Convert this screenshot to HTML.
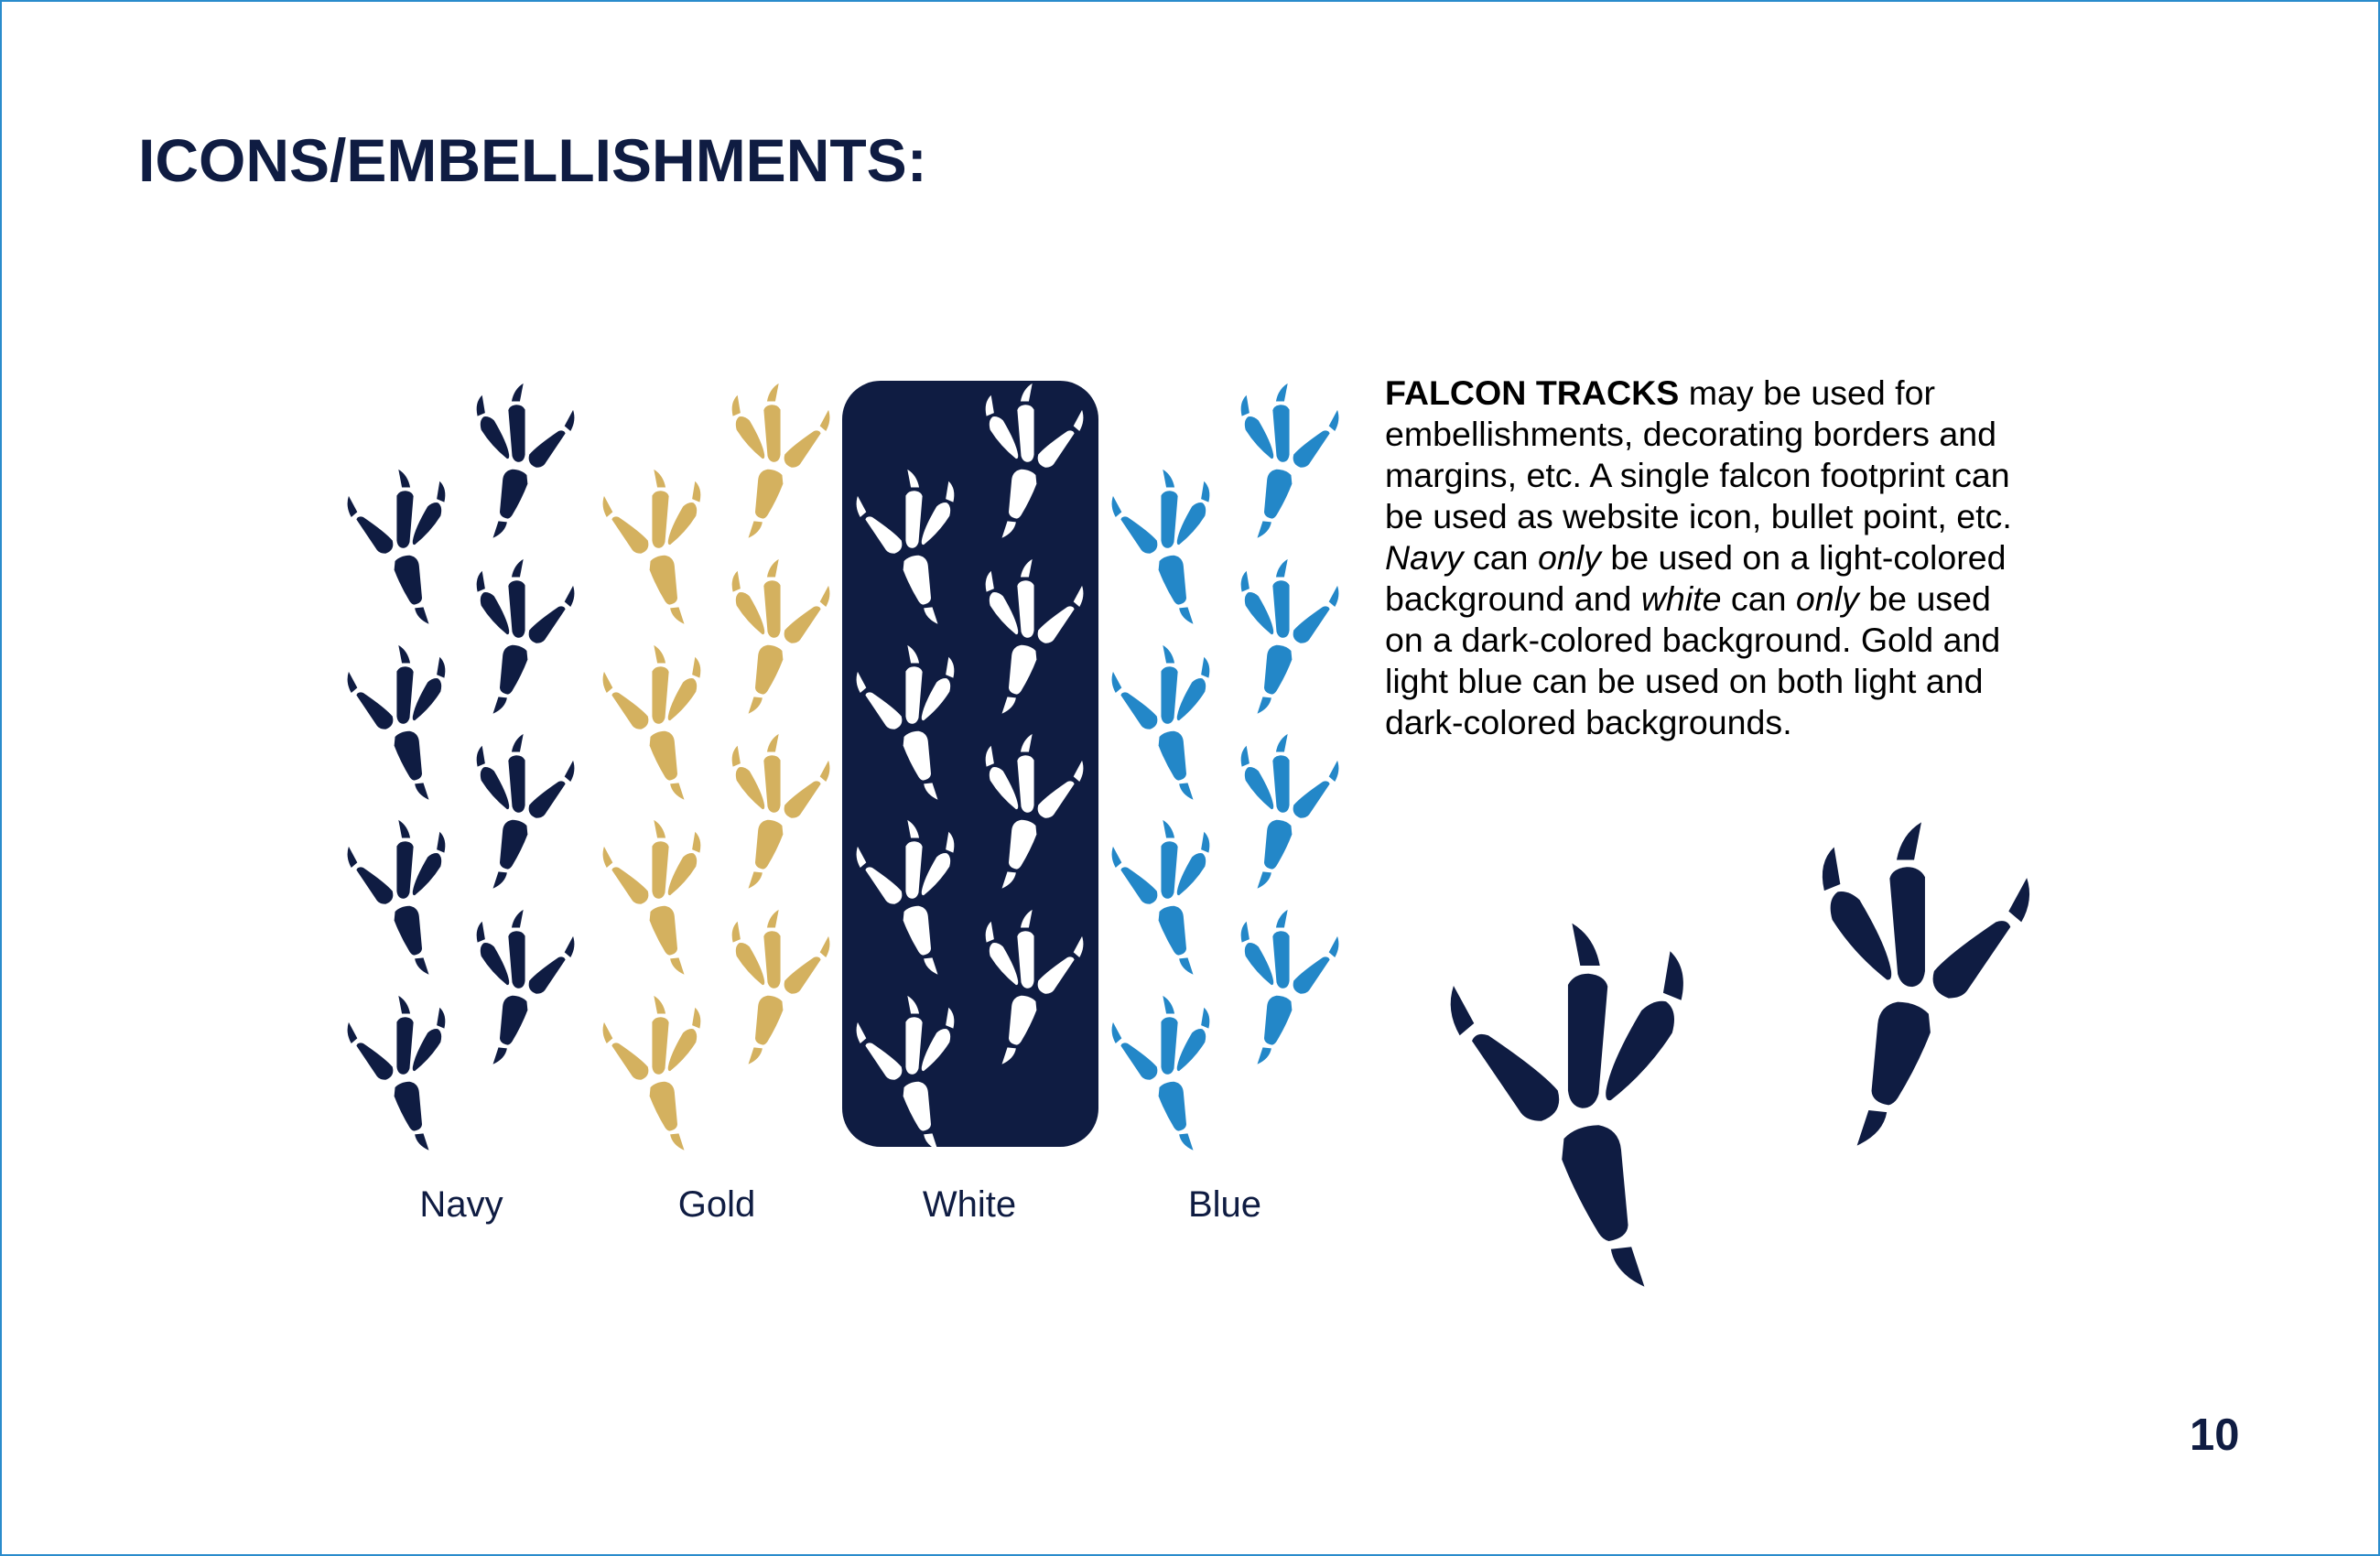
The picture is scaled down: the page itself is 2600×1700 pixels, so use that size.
<!DOCTYPE html>
<html><head><meta charset="utf-8"><style>
html,body{margin:0;padding:0}
body{width:2600px;height:1700px;position:relative;background:#fff;overflow:hidden;font-family:"Liberation Sans",Arial,sans-serif}
.frame{position:absolute;left:0;top:0;width:2596px;height:1696px;border:2px solid #2a8ccc}
h1{position:absolute;left:151px;top:142px;margin:0;font-size:66px;line-height:67px;font-weight:bold;color:#0f1c42;white-space:nowrap}
.p{position:absolute;left:1513px;top:407px;font-size:37px;line-height:45px;color:#000;white-space:nowrap;transform:scaleX(1.015);transform-origin:0 0}
.lab{position:absolute;top:1296px;font-size:40px;line-height:40px;color:#0f1c42;transform:translateX(-50%)}
.num{position:absolute;left:2392px;top:1538px;font-size:49px;font-weight:bold;color:#0f1c42;line-height:60px}
svg{position:absolute;left:0;top:0}
</style></head><body>
<div class="frame"></div>
<h1>ICONS/EMBELLISHMENTS:</h1>
<div class="p"><b>FALCON TRACKS</b> may be used for<br>embellishments, decorating borders and<br>margins, etc. A single falcon footprint can<br>be used as website icon, bullet point, etc.<br><i>Navy</i> can <i>only</i> be used on a light-colored<br>background and <i>white</i> can <i>only</i> be used<br>on a dark-colored background. Gold and<br>light blue can be used on both light and<br>dark-colored backgrounds.</div>
<svg width="2600" height="1700" viewBox="0 0 2600 1700">
<defs>
<g id="f">
<path d="M365,560 Q380,525 415,525 Q455,530 462,565 L440,900 Q430,945 400,945 Q370,940 365,890 Z"/>
<path d="M375,368 Q430,410 443,500 L395,500 Z"/>
<path d="M130,735 Q140,705 170,718 Q300,830 340,890 Q355,960 300,985 Q265,985 250,960 Z"/>
<path d="M85,563 L135,680 L100,718 Q65,640 85,563 Z"/>
<path d="M545,640 Q575,605 605,612 Q635,640 620,710 Q560,830 470,920 Q455,925 458,890 Q470,800 545,640 Z"/>
<path d="M615,455 Q660,510 642,608 L598,585 Z"/>
<path d="M355,1040 Q385,1000 440,998 Q490,1010 495,1075 L512,1310 Q510,1350 465,1360 Q450,1355 440,1335 Q385,1220 350,1105 Z"/>
<path d="M470,1385 L520,1378 L552,1502 Q480,1460 470,1385 Z"/>
</g>
</defs>
<rect x="920" y="416" width="280" height="837" rx="42" fill="#0f1c42"/>
<g fill="#0f1c42">
<use href="#f" transform="translate(365,458) scale(0.1875,0.149)"/>
<use href="#f" transform="translate(365,650) scale(0.1875,0.149)"/>
<use href="#f" transform="translate(365,841) scale(0.1875,0.149)"/>
<use href="#f" transform="translate(365,1033) scale(0.1875,0.149)"/>
<use href="#f" transform="translate(642,364) scale(-0.1875,0.149)"/>
<use href="#f" transform="translate(642,556) scale(-0.1875,0.149)"/>
<use href="#f" transform="translate(642,747) scale(-0.1875,0.149)"/>
<use href="#f" transform="translate(642,939) scale(-0.1875,0.149)"/>
</g>
<g fill="#d4b15f">
<use href="#f" transform="translate(644,458) scale(0.1875,0.149)"/>
<use href="#f" transform="translate(644,650) scale(0.1875,0.149)"/>
<use href="#f" transform="translate(644,841) scale(0.1875,0.149)"/>
<use href="#f" transform="translate(644,1033) scale(0.1875,0.149)"/>
<use href="#f" transform="translate(921,364) scale(-0.1875,0.149)"/>
<use href="#f" transform="translate(921,556) scale(-0.1875,0.149)"/>
<use href="#f" transform="translate(921,747) scale(-0.1875,0.149)"/>
<use href="#f" transform="translate(921,939) scale(-0.1875,0.149)"/>
</g>
<g fill="#ffffff">
<use href="#f" transform="translate(921,458) scale(0.1875,0.149)"/>
<use href="#f" transform="translate(921,650) scale(0.1875,0.149)"/>
<use href="#f" transform="translate(921,841) scale(0.1875,0.149)"/>
<use href="#f" transform="translate(921,1033) scale(0.1875,0.149)"/>
<use href="#f" transform="translate(1198,364) scale(-0.1875,0.149)"/>
<use href="#f" transform="translate(1198,556) scale(-0.1875,0.149)"/>
<use href="#f" transform="translate(1198,747) scale(-0.1875,0.149)"/>
<use href="#f" transform="translate(1198,939) scale(-0.1875,0.149)"/>
</g>
<g fill="#2387c8">
<use href="#f" transform="translate(1200,458) scale(0.1875,0.149)"/>
<use href="#f" transform="translate(1200,650) scale(0.1875,0.149)"/>
<use href="#f" transform="translate(1200,841) scale(0.1875,0.149)"/>
<use href="#f" transform="translate(1200,1033) scale(0.1875,0.149)"/>
<use href="#f" transform="translate(1477,364) scale(-0.1875,0.149)"/>
<use href="#f" transform="translate(1477,556) scale(-0.1875,0.149)"/>
<use href="#f" transform="translate(1477,747) scale(-0.1875,0.149)"/>
<use href="#f" transform="translate(1477,939) scale(-0.1875,0.149)"/>
</g>
<g fill="#0f1c42">
<use href="#f" transform="translate(1550,880) scale(0.4464,0.35)"/>
<use href="#f" transform="translate(1550,880) scale(0.4464,0.35) translate(1563.5,-275) scale(-0.89,0.89)"/>
</g>
</svg>
<div class="lab" style="left:504px">Navy</div>
<div class="lab" style="left:783px">Gold</div>
<div class="lab" style="left:1059px">White</div>
<div class="lab" style="left:1338px">Blue</div>
<div class="num">10</div>
</body></html>
